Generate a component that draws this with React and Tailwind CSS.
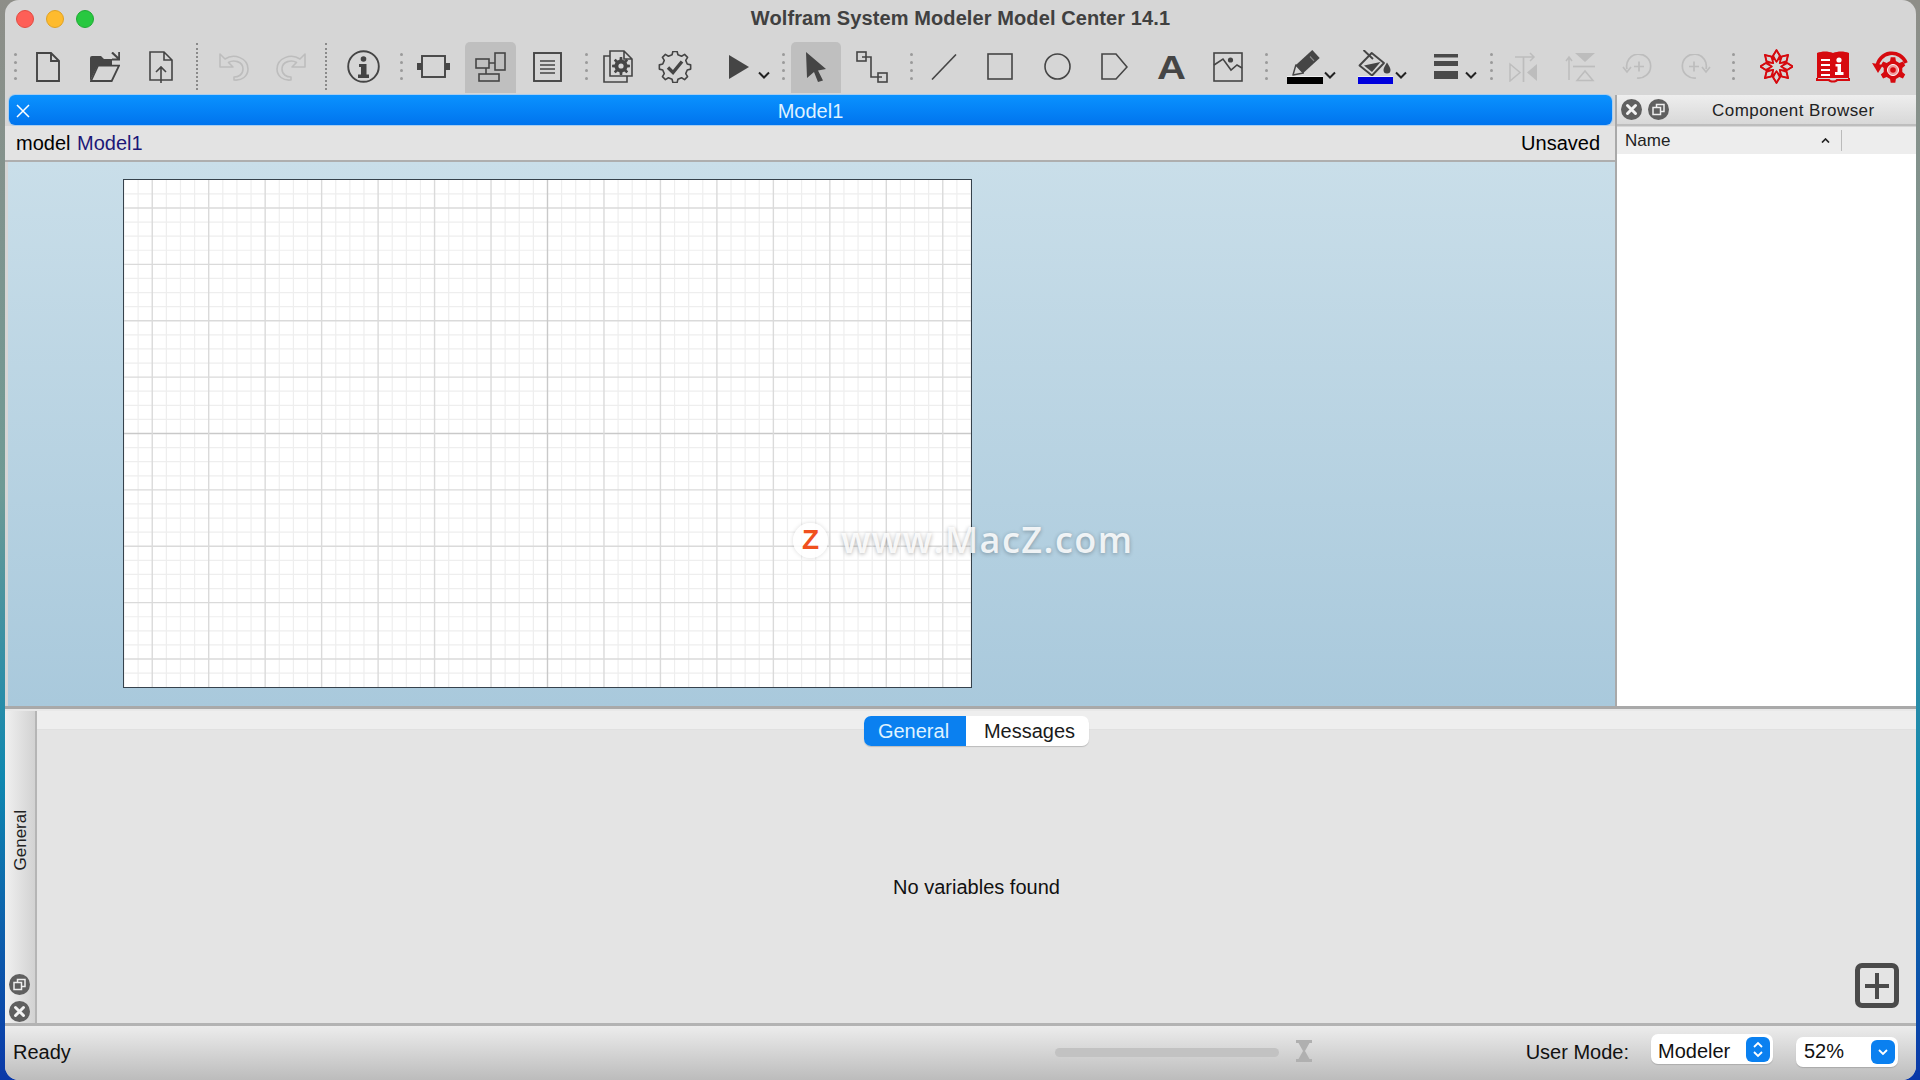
import React from "react";

const C = "#454545";
const G = "#bdbdbd";
const R = "#d60a0f";

function gearPath(cx, cy, rOut, rIn, n) {
  const pts = [];
  const step = (Math.PI * 2) / n;
  for (let i = 0; i < n; i++) {
    const a = i * step - Math.PI / 2;
    [[-0.3, rIn], [-0.17, rOut], [0.17, rOut], [0.3, rIn]].forEach(([o, r]) => {
      pts.push([cx + r * Math.cos(a + o * step), cy + r * Math.sin(a + o * step)]);
    });
  }
  return "M" + pts.map((p) => p[0].toFixed(2) + " " + p[1].toFixed(2)).join("L") + "Z";
}

function starPoints(cx, cy, r1, r2, n, rot = 0) {
  const pts = [];
  for (let i = 0; i < n * 2; i++) {
    const a = (i * Math.PI) / n - Math.PI / 2 + rot;
    const r = i % 2 === 0 ? r1 : r2;
    pts.push((cx + r * Math.cos(a)).toFixed(2) + "," + (cy + r * Math.sin(a)).toFixed(2));
  }
  return pts.join(" ");
}

function Grip({ className }) {
  return (
    <div className={"flex h-[28px] w-[4px] flex-col justify-between " + className}>
      <span className="block h-[3px] w-[3px] rounded-full bg-[#9a9a9a]" />
      <span className="block h-[3px] w-[3px] rounded-full bg-[#9a9a9a]" />
      <span className="block h-[3px] w-[3px] rounded-full bg-[#9a9a9a]" />
      <span className="block h-[3px] w-[3px] rounded-full bg-[#9a9a9a]" />
    </div>
  );
}

function Sep({ className }) {
  return <div className={"h-[47px] w-0 border-l-2 border-dotted border-[#8a8a8a] " + className} />;
}

function Chevron({ className }) {
  return (
    <svg className={"mt-[16px] h-[6px] w-[8px] overflow-visible " + className} viewBox="0 0 8 6">
      <path d="M-1 .5 L4 5.5 L9 .5" fill="none" stroke="#222" strokeWidth="2" />
    </svg>
  );
}

function CloseRound({ className }) {
  return (
    <svg className={"h-[21px] w-[21px] " + className} viewBox="0 0 21 21">
      <circle cx="10.5" cy="10.5" r="10.5" fill="#5f5f5f" />
      <path d="M6.5 6.5 L14.5 14.5 M14.5 6.5 L6.5 14.5" stroke="#f2f2f2" strokeWidth="3" strokeLinecap="round" />
    </svg>
  );
}

function Undock({ className }) {
  return (
    <svg className={"h-[21px] w-[21px] " + className} viewBox="0 0 21 21">
      <circle cx="10.5" cy="10.5" r="10.5" fill="#5f5f5f" />
      <rect x="8.5" y="5.5" width="7.5" height="7" fill="none" stroke="#eee" strokeWidth="1.5" />
      <rect x="5" y="8.5" width="7.5" height="7" fill="#5f5f5f" stroke="#eee" strokeWidth="1.5" />
    </svg>
  );
}

const s = { fill: "none", stroke: C, strokeWidth: 1.9 };
const thin = { fill: "none", stroke: C, strokeWidth: 1.6 };

function UndoIcon({ className, flip }) {
  return (
    <svg className={"h-[29px] w-[30px] " + className} viewBox="0 0 30 29">
      <g transform={flip ? "translate(30 0) scale(-1 1)" : undefined}>
        <path d="M1 2 V15 H14 L9.5 10.5 C14 7.5 24 9 24 17 C24 23 19 25 15 25 V28 C23 29 29 24 29 17 C29 6 15 1 6 7 Z" fill="none" stroke={G} strokeWidth="1.6" strokeLinejoin="round" />
      </g>
    </svg>
  );
}

function RotIcon({ className, flip }) {
  return (
    <svg className={"h-[25px] w-[30px] " + className} viewBox="0 0 30 25">
      <g transform={flip ? "translate(30 0) scale(-1 1)" : undefined} fill="none" stroke={G} strokeWidth="1.7">
        <path d="M5 15 A12 12 0 1 1 15 24" />
        <path d="M1 13 L5 18 L9 13" />
        <path d="M12 12.5 H22 M17 7.5 V17.5" />
      </g>
    </svg>
  );
}

function WolframStar({ className }) {
  const kites = [];
  for (let i = 0; i < 8; i++) {
    kites.push(
      <polygon
        key={i}
        points="16.5,13 19.8,6.5 16.5,1.5 13.2,6.5"
        fill="none"
        stroke={R}
        strokeWidth="1.5"
        strokeLinejoin="round"
        transform={`rotate(${i * 45} 16.5 17.5)`}
      />
    );
  }
  return (
    <svg className={"h-[35px] w-[33px] " + className} viewBox="0 0 33 35">
      <polygon points={starPoints(16.5, 17.5, 16.5, 10.5, 8)} fill="none" stroke={R} strokeWidth="1.8" strokeLinejoin="round" />
      <polygon points={starPoints(16.5, 17.5, 10.5, 5, 8, Math.PI / 8)} fill="none" stroke={R} strokeWidth="1.6" strokeLinejoin="round" />
      {kites}
    </svg>
  );
}

function Toolbar() {
  return (
    <div className="flex h-[53px] items-center pb-[4px]">
      <Grip className="ml-[9px]" />
      <svg className="ml-[18px] h-[30px] w-[24px]" viewBox="0 0 24 30">
        <path d="M1 1 H15 L23 9 V29 H1 Z M15 1 V9 H23" {...s} />
      </svg>
      <svg className="ml-[30px] h-[30px] w-[30px]" viewBox="0 0 30 30">
        <path d="M0 6 Q0 4 2 4 H11 L14 7 H22 V13 H8 L0 29 Z" fill={C} />
        <path d="M8 13.7 H29 L21.7 29 H1 Z" fill="#d6d6d6" stroke={C} strokeWidth="1.8" />
        <path d="M22 .5 L29 7 M29.3 0 V7.5 H22" fill="none" stroke={C} strokeWidth="2.2" />
      </svg>
      <svg className="ml-[29px] h-[32px] w-[24px]" viewBox="0 0 24 32">
        <path d="M1 1 H15 L23 9 V29 H1 Z M15 1 V9 H23" {...thin} />
        <path d="M12 32 V16 M7 21 L12 16 L17 21" {...thin} />
      </svg>
      <Sep className="ml-[23px]" />
      <UndoIcon className="ml-[21px]" />
      <UndoIcon className="ml-[27px]" flip />
      <Sep className="ml-[19px]" />
      <svg className="ml-[20px] h-[33px] w-[33px]" viewBox="0 0 33 33">
        <circle cx="16.5" cy="16.5" r="15.3" {...s} />
        <circle cx="16.5" cy="9" r="2.8" fill={C} />
        <path d="M12 14 H19.5 V24.5 H22 V28 H11 V24.5 H14 V17 H12 Z" fill={C} />
      </svg>
      <Grip className="ml-[20px]" />
      <svg className="ml-[13px] h-[23px] w-[33px]" viewBox="0 0 33 23">
        <rect x="5" y="1" width="23" height="21" {...s} />
        <rect x="0" y="8" width="5" height="7" fill={C} />
        <rect x="28" y="8" width="5" height="7" fill={C} />
      </svg>
      <div className="ml-[15px] flex h-[51px] w-[51px] items-center justify-center self-start rounded-t-[5px] bg-[#bfbfbf] pb-[2px]">
        <svg className="h-[30px] w-[31px]" viewBox="0 0 31 30">
          <rect x="1" y="7" width="13" height="9" {...thin} />
          <rect x="20" y="1" width="10" height="17" {...thin} />
          <rect x="4" y="22" width="20" height="7" {...thin} />
          <path d="M14 11 H20 M11 16 V22" {...thin} />
        </svg>
      </div>
      <svg className="ml-[17px] h-[30px] w-[29px]" viewBox="0 0 29 30">
        <rect x="1" y="1" width="27" height="28" {...s} />
        <path d="M7 9 H22 M7 13 H22 M7 17 H22 M7 21 H22" {...thin} />
      </svg>
      <Grip className="ml-[23px]" />
      <svg className="ml-[14px] h-[33px] w-[30px]" viewBox="0 0 30 33">
        <path d="M7 6 H1 V32 H24 V26" {...thin} />
        <path d="M7 1 H21 L29 9 V26 H7 Z M21 1 V9 H29" {...thin} />
        <path d={gearPath(18, 16, 9, 6.5, 8)} fill={C} />
        <circle cx="18" cy="16" r="2.6" fill="#d6d6d6" />
      </svg>
      <svg className="ml-[25px] h-[32px] w-[34px]" viewBox="0 0 34 32">
        <path d={gearPath(17, 16, 15.8, 12.6, 8)} fill="none" stroke={C} strokeWidth="1.6" strokeLinejoin="round" />
        <path d="M10 16.5 L15 21.5 L24 10.5" fill="none" stroke={C} strokeWidth="3.4" />
      </svg>
      <svg className="ml-[37px] h-[24px] w-[20px]" viewBox="0 0 20 24">
        <path d="M0 0 L20 12 L0 24 Z" fill={C} />
      </svg>
      <Chevron className="ml-[11px]" />
      <Grip className="ml-[14px]" />
      <div className="ml-[5px] flex h-[51px] w-[50px] items-center justify-center self-start rounded-t-[5px] bg-[#bfbfbf] pb-[2px]">
        <svg className="h-[30px] w-[22px]" viewBox="0 0 22 30">
          <path d="M1 0 L21 17 L13 18.5 L18 28.5 L13 30 L9 20 L2 26 Z" fill={C} />
        </svg>
      </div>
      <svg className="ml-[15px] h-[32px] w-[32px]" viewBox="0 0 32 32">
        <rect x="1" y="1" width="9" height="9" {...thin} />
        <rect x="22" y="22" width="9" height="9" {...thin} />
        <path d="M6 6 H15 V26 H26" {...thin} />
      </svg>
      <Grip className="ml-[22px]" />
      <svg className="ml-[17px] h-[26px] w-[26px]" viewBox="0 0 26 26">
        <path d="M1 25.5 L25 .5" {...thin} />
      </svg>
      <svg className="ml-[30px] h-[27px] w-[26px]" viewBox="0 0 26 27">
        <rect x="1" y="1" width="24" height="25" {...thin} />
      </svg>
      <svg className="ml-[31px] h-[27px] w-[27px]" viewBox="0 0 27 27">
        <ellipse cx="13.5" cy="13.5" rx="12.5" ry="12.5" {...thin} />
      </svg>
      <svg className="ml-[30px] h-[27px] w-[27px]" viewBox="0 0 27 27">
        <path d="M1 1 H15 L26 14 L15 26 H1 Z" {...thin} />
      </svg>
      <span className="ml-[29px] flex h-[27px] w-[29px] scale-x-[1.18] items-center justify-center text-[34px] leading-none font-bold text-[#454545]">A</span>
      <svg className="ml-[27px] h-[30px] w-[30px]" viewBox="0 0 30 30">
        <rect x="1" y="1" width="28" height="28" {...thin} />
        <circle cx="17.5" cy="8" r="2.6" fill={C} />
        <path d="M1 13 L10 7 L18 18 L24 13 L29 16" {...thin} />
      </svg>
      <Grip className="ml-[22px]" />
      <svg className="ml-[18px] h-[34px] w-[36px] overflow-visible" viewBox="0 0 36 34">
        <path d="M8.9 14.9 L25.3 0 L32.7 8.1 L16.3 23.1 Z" fill={C} />
        <path d="M23 6.5 L27 10.8" stroke="#8a8a8a" strokeWidth="1.2" />
        <path d="M6 25 L8.9 14.9 L16.3 23.1 Z" fill="none" stroke={C} strokeWidth="1.5" strokeLinejoin="round" />
        <rect x="0" y="26" width="36" height="1" fill="#efefef" />
        <rect x="0" y="27" width="36" height="7" fill="#000" />
      </svg>
      <Chevron className="ml-[3px]" />
      <svg className="ml-[24px] h-[34px] w-[35px]" viewBox="0 0 35 34">
        <path d="M13.7 3 L26 13 L14 25.5 L1.5 15.5 Z" fill="none" stroke={C} strokeWidth="1.9" strokeLinejoin="round" />
        <path d="M6 15.5 L22.5 12 L14 22 Z" fill={C} />
        <path d="M5.5 0 L15 9" {...s} />
        <path d="M29 12.5 C31 16 32.5 18 32.5 20 A3.5 3.5 0 0 1 25.5 20 C25.5 18 27 16 29 12.5 Z" fill={C} />
        <rect x="0" y="26" width="35" height="1" fill="#efefef" />
        <rect x="0" y="27" width="35" height="7" fill="#0000dd" />
      </svg>
      <Chevron className="ml-[4px]" />
      <svg className="ml-[29px] h-[25px] w-[24px]" viewBox="0 0 24 25">
        <rect y="0" width="24" height="3.5" fill="#4a4a4a" />
        <rect y="7" width="24" height="5" fill="#4a4a4a" />
        <rect y="17" width="24" height="8" fill="#4a4a4a" />
      </svg>
      <Chevron className="ml-[9px]" />
      <Grip className="ml-[15px]" />
      <svg className="ml-[15px] h-[30px] w-[29px]" viewBox="0 0 29 30">
        <path d="M1 12 V29 L11 20.5 Z" fill="none" stroke={G} strokeWidth="1.5" />
        <path d="M14.5 5 V30" stroke={G} strokeWidth="1.7" />
        <path d="M28 12 V29 L18 20.5 Z" fill={G} />
        <path d="M6 5 H25 M21 1 L25 5 L21 9" fill="none" stroke={G} strokeWidth="1.5" />
      </svg>
      <svg className="ml-[27px] h-[30px] w-[30px]" viewBox="0 0 30 30">
        <path d="M10 1 H30 L20 10 Z" fill={G} />
        <path d="M8 14.5 H30" stroke={G} strokeWidth="1.7" />
        <path d="M12 28.5 H28 L20 19 Z" fill="none" stroke={G} strokeWidth="1.5" />
        <path d="M4 28 V5 M1 9 L4 5 L7 9" fill="none" stroke={G} strokeWidth="1.5" />
      </svg>
      <RotIcon className="ml-[27px]" />
      <RotIcon className="ml-[29px]" flip />
      <Grip className="ml-[21px]" />
      <WolframStar className="ml-[24px]" />
      <svg className="ml-[23px] h-[33px] w-[34px]" viewBox="0 0 34 33">
        <path d="M1 3 C6 1 12 1 17 3 C22 1 28 1 33 3 V28 H1 Z" fill={R} />
        <path d="M1 28 V30 H13 C14 32 20 32 21 30 H33 V28" fill="none" stroke={R} strokeWidth="2" />
        <path d="M5 10 H14 M5 15 H14 M5 20 H14 M5 25 H14" stroke="#fff" strokeWidth="2" />
        <circle cx="23" cy="10" r="2.6" fill="#fff" />
        <path d="M19.5 14 H25 V22 H27.5 V25 H19 V22 H21.5 V16.5 H19.5 Z" fill="#fff" />
      </svg>
      <svg className="ml-[22px] h-[33px] w-[36px] overflow-visible" viewBox="0 0 36 33">
        <path d="M5 17 A15 15 0 0 1 34 13" fill="none" stroke={R} strokeWidth="3.6" />
        <path d="M0 13 L11 15 L6 23 Z" fill={R} />
        <path d={gearPath(21, 20, 13, 9.5, 6)} fill={R} />
        <circle cx="21" cy="20" r="5.5" fill="#e99" stroke="#fff" strokeWidth="1" />
        <circle cx="21" cy="20" r="2.8" fill={R} />
      </svg>
    </div>
  );
}

function Canvas() {
  const W = 849;
  const H = 509;
  const xs = [];
  const ys = [];
  for (let k = -30; k <= 30; k++) xs.push(k);
  for (let k = -17; k <= 17; k++) ys.push(k);
  const col = (k) => (k === 0 ? "#c9c9c9" : k % 4 === 0 ? "#dadada" : "#eeeeee");
  const wid = (k) => (k % 4 === 0 ? 1.4 : 1.2);
  return (
    <div className="mt-[17px] ml-[115px] h-[509px] w-[849px] border-[1.5px] border-[#36424c] bg-white">
      <svg className="block h-full w-full" viewBox={`0 0 ${W} ${H}`} preserveAspectRatio="none">
        {ys.map((k) => (k % 4 !== 0 ? <line key={"h" + k} x1="0" x2={W} y1={H / 2 + k * 14.15} y2={H / 2 + k * 14.15} stroke={col(k)} strokeWidth={wid(k)} /> : null))}
        {xs.map((k) => (k % 4 !== 0 ? <line key={"v" + k} y1="0" y2={H} x1={W / 2 + k * 14.15} x2={W / 2 + k * 14.15} stroke={col(k)} strokeWidth={wid(k)} /> : null))}
        {ys.map((k) => (k % 4 === 0 ? <line key={"H" + k} x1="0" x2={W} y1={H / 2 + k * 14.15} y2={H / 2 + k * 14.15} stroke={col(k)} strokeWidth={wid(k)} /> : null))}
        {xs.map((k) => (k % 4 === 0 ? <line key={"V" + k} y1="0" y2={H} x1={W / 2 + k * 14.15} x2={W / 2 + k * 14.15} stroke={col(k)} strokeWidth={wid(k)} /> : null))}
      </svg>
    </div>
  );
}

export default function App() {
  return (
    <div className="flex h-screen w-screen bg-[linear-gradient(180deg,#8e8e88_0%,#6f9a94_45%,#0f88b0_72%,#0a38a8_100%)] pr-[4px] pl-[5px] font-['Liberation_Sans',Arial,sans-serif] text-black">
      <div className="relative flex min-w-0 flex-1 flex-col overflow-hidden rounded-t-[14px] rounded-b-[14px] bg-[#d6d6d6]">
        {/* title bar */}
        <div className="relative flex h-[42px] shrink-0 items-center justify-center pb-[6px]">
          <div className="absolute top-[10px] left-[11px] flex gap-[12px]">
            <span className="block h-[18px] w-[18px] rounded-full border border-[#e24b41] bg-[#fe5f57]" />
            <span className="block h-[18px] w-[18px] rounded-full border border-[#dfa123] bg-[#febb2e]" />
            <span className="block h-[18px] w-[18px] rounded-full border border-[#1ea933] bg-[#28c840]" />
          </div>
          <span className="text-[20px] font-bold tracking-[0.1px] text-[#404040]">Wolfram System Modeler Model Center 14.1</span>
        </div>
        <Toolbar />

        {/* main */}
        <div className="flex h-[614px] shrink-0 border-b-[3px] border-[#a9a9a9]">
          <div className="flex min-w-0 flex-1 flex-col">
            <div className="mr-[3px] ml-[4px] flex h-[30px] shrink-0 items-center rounded-[6px] bg-[linear-gradient(180deg,#0a92ff,#0074ee)] pt-[1px] text-[20px] text-[#dff2ff] shadow-[0_0_0_1px_#a9cdee]">
              <svg className="ml-[7px] h-[14px] w-[14px]" viewBox="0 0 14 14">
                <path d="M1 1 L13 13 M13 1 L1 13" stroke="#fff" strokeWidth="1.5" />
              </svg>
              <span className="flex-1 pr-[21px] text-center">Model1</span>
            </div>
            <div className="mt-[1px] flex h-[36px] shrink-0 items-center justify-between border-b-2 border-[#aeaeae] bg-[#e3e3e3] pr-[15px] pl-[11px] text-[20px]">
              <span>
                model <span className="ml-[1px] text-[#1c1878]">Model1</span>
              </span>
              <span>Unsaved</span>
            </div>
            <div className="relative ml-[3px] min-h-0 flex-1 bg-[linear-gradient(180deg,#c9dee9,#a9c9dc)]">
              <Canvas />
              <div className="absolute top-[360px] left-[785px] flex items-center">
                <span className="flex h-[35px] w-[35px] items-center justify-center rounded-full bg-white/80 text-[28px] font-bold text-[#f0501e] shadow-[0_0_4px_rgba(0,0,0,0.15)]">Z</span>
                <span className="ml-[13px] font-['Open_Sans',sans-serif] text-[36px] leading-none font-semibold tracking-[1.5px] text-white/85 [text-shadow:0_1px_4px_rgba(0,0,0,0.3)]">www.MacZ.com</span>
              </div>
            </div>
          </div>
          <div className="flex w-[301px] shrink-0 flex-col border-l-2 border-[#a9a9a9] bg-[#d6d6d6]">
            <div className="flex h-[31px] shrink-0 items-center border-b-2 border-[#bdbdbd] bg-[linear-gradient(180deg,#eeeeee,#d8d8d8)] pl-[4px] text-[17px] text-[#222]">
              <CloseRound className="" />
              <Undock className="ml-[6px]" />
              <span className="ml-[43px] pt-[2px] tracking-[0.45px]">Component Browser</span>
            </div>
            <div className="mt-[1px] flex min-h-0 flex-1 flex-col bg-white">
              <div className="flex h-[27px] shrink-0 items-center bg-[#ededed] text-[17px] text-[#222]">
                <span className="ml-[8px] w-[196px]">Name</span>
                <svg className="h-[5px] w-[9px]" viewBox="0 0 9 5">
                  <path d="M1 4.5 L4.5 1 L8 4.5" fill="none" stroke="#222" strokeWidth="1.7" />
                </svg>
                <span className="ml-[11px] h-[21px] w-0 border-l border-[#bbbbbb]" />
              </div>
            </div>
          </div>
        </div>

        {/* bottom dock */}
        <div className="flex min-h-0 flex-1 border-t-[2px] border-[#e8e8e8]">
          <div className="flex w-[32px] shrink-0 flex-col items-center border-r-2 border-[#b5b5b5] bg-[linear-gradient(90deg,#f0f0f0,#d2d2d2)]">
            <div className="ml-[1px] flex flex-1 items-center pb-[5px]">
              <span className="rotate-180 text-[17px] text-[#222] [writing-mode:vertical-rl]">General</span>
            </div>
            <Undock className="mr-[1px] mb-[6px]" />
            <CloseRound className="mr-[1px] mb-[1px]" />
          </div>
          <div className="relative flex min-w-0 flex-1 flex-col bg-[#e4e4e4]">
            <div className="h-[19px] shrink-0 border-b border-[#e0e0e0] bg-[#eeeeee]" />
            <div className="-mt-[14px] flex justify-center">
              <div className="flex h-[30px] overflow-hidden rounded-[7px] bg-white text-[20px] shadow-[0_1px_1px_rgba(0,0,0,0.18)]">
                <span className="flex w-[102px] items-center justify-center bg-[#0a80f0] pr-[3px] text-[#dff2ff]">General</span>
                <span className="flex w-[123px] items-center justify-center pl-[4px] text-[#1a1a1a]">Messages</span>
              </div>
            </div>
            <div className="flex flex-1 items-center justify-center pt-[5px] text-[20px] text-[#111]">No variables found</div>
            <div className="absolute right-[17px] bottom-[15px] flex h-[45px] w-[44px] items-center justify-center rounded-[7px] border-[5px] border-[#4a4a4a]">
              <svg className="h-[26px] w-[24px]" viewBox="0 0 24 26">
                <path d="M12 0 V26 M0 13 H24" stroke="#4a4a4a" strokeWidth="4" />
              </svg>
            </div>
          </div>
        </div>

        {/* status */}
        <div className="flex h-[57px] shrink-0 items-center border-t-[3px] border-[#b3b3b3] bg-[linear-gradient(180deg,#ececec,#bcbcbc)] pb-[3px] text-[20px] text-[#111]">
          <span className="flex-1 pl-[8px]">Ready</span>
          <div className="flex items-center pr-[18px]">
            <span className="mt-[2px] h-[9px] w-[224px] rounded-full bg-[#c2c2c2]" />
            <svg className="-mt-[2px] ml-[16px] h-[22px] w-[18px]" viewBox="0 0 18 22">
              <path d="M1 0 H17 V3 H1 Z M1 19 H17 V22 H1 Z M3.5 3 H14.5 L10 11 L14.5 19 H3.5 L8 11 Z" fill="#b0b0b0" />
            </svg>
            <span className="ml-[213px]">User Mode:</span>
            <div className="relative -mt-[5px] ml-[22px] flex h-[30px] w-[122px] items-center rounded-[7px] bg-white pt-[3px] pl-[7px] shadow-[0_1px_1px_rgba(0,0,0,0.15)]">
              Modeler
              <span className="absolute top-[3px] right-[3px] flex h-[25px] w-[24px] items-center justify-center rounded-[6px] bg-[#0a80f0]">
                <svg className="h-[19px] w-[12px]" viewBox="0 0 12 19">
                  <path d="M2 7 L6 3 L10 7 M2 12 L6 16 L10 12" fill="none" stroke="#fff" strokeWidth="1.8" />
                </svg>
              </span>
            </div>
            <div className="relative mt-[1px] ml-[23px] flex h-[30px] w-[102px] items-center rounded-[7px] bg-white pb-[2px] pl-[8px] shadow-[0_1px_1px_rgba(0,0,0,0.15)]">
              52%
              <span className="absolute top-[3px] right-[3px] flex h-[24px] w-[24px] items-center justify-center rounded-[6px] bg-[#0a80f0]">
                <svg className="h-[8px] w-[12px]" viewBox="0 0 12 8">
                  <path d="M2 2 L6 6 L10 2" fill="none" stroke="#fff" strokeWidth="1.8" />
                </svg>
              </span>
            </div>
          </div>
        </div>
      </div>
    </div>
  );
}
